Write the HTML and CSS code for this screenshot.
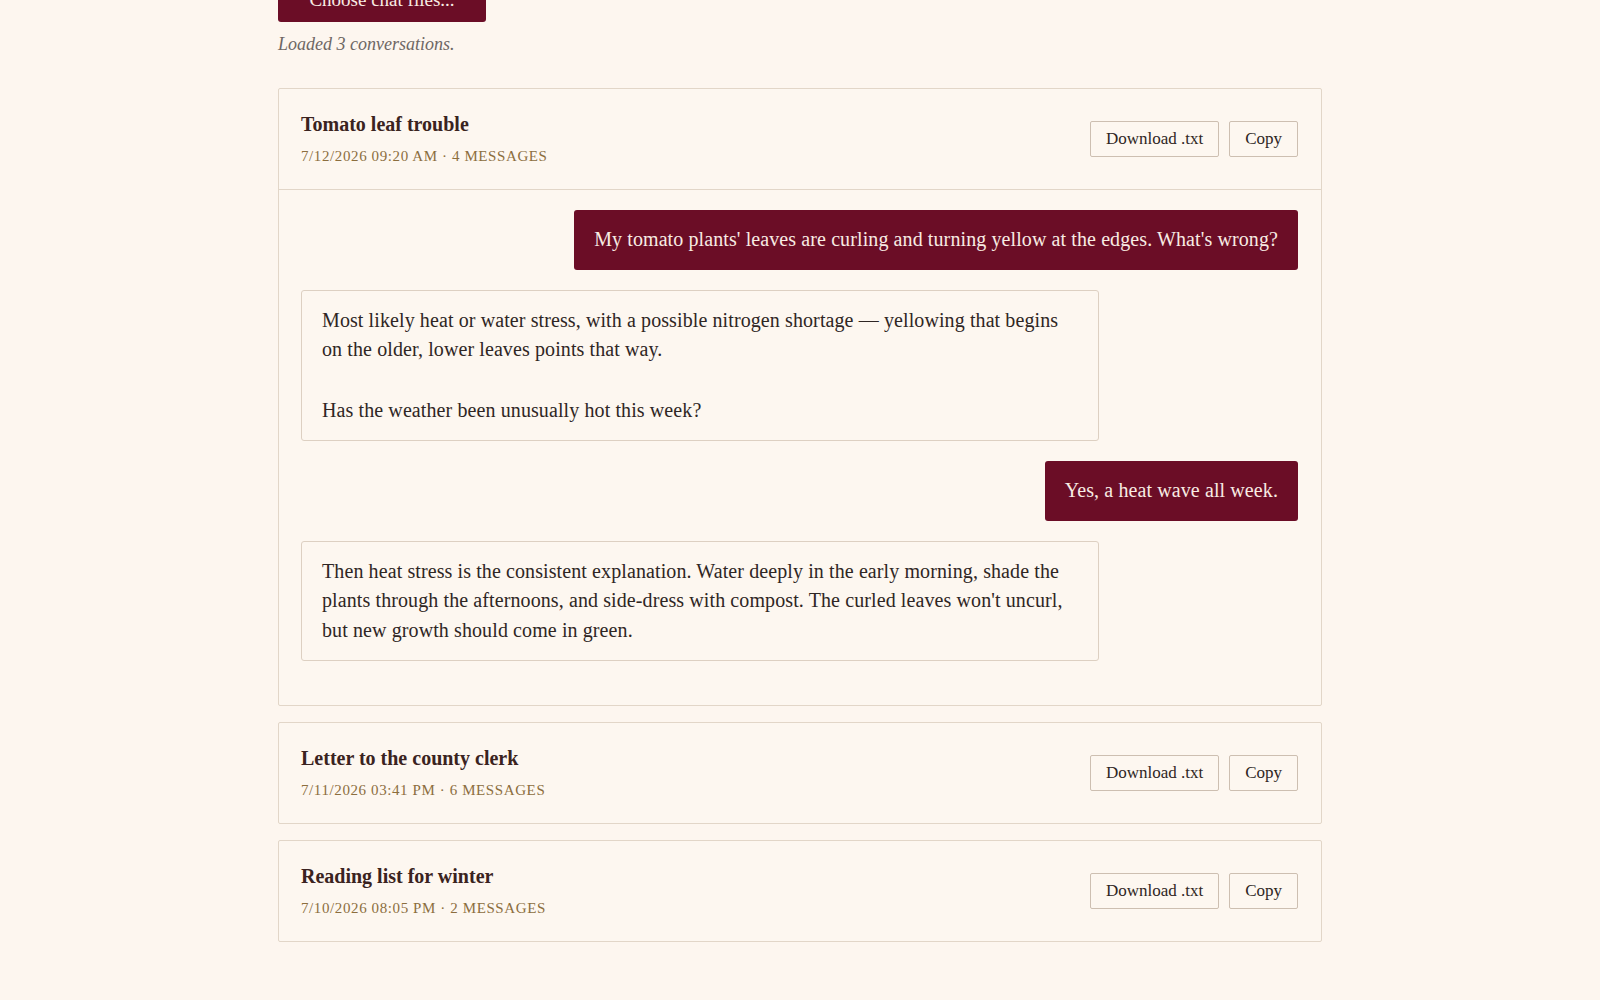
FILE: index.html
```html
<!DOCTYPE html>
<html lang="en">
<head>
    <meta charset="UTF-8">
    <meta name="viewport" content="width=device-width, initial-scale=1.0">
    <title>Chat Export Viewer</title>
    <link rel="stylesheet" href="styles.css">
</head>
<body>
    <div class="container">
        <!-- File picker -->
        <div class="loader">
            <button class="pick-btn">Choose chat files...</button>
            <p class="status">Loaded 3 conversations.</p>
        </div>

        <!-- Conversation list -->
        <div class="conversation open">
            <div class="conv-header">
                <div class="conv-info">
                    <h3>Tomato leaf trouble</h3>
                    <div class="meta">7/12/2026 09:20 AM &middot; 4 messages</div>
                </div>
                <div class="actions">
                    <button class="small-btn">Download .txt</button>
                    <button class="small-btn">Copy</button>
                </div>
            </div>
            <div class="messages">
                <div class="msg user">
                    <p>My tomato plants' leaves are curling and turning yellow at the edges. What's wrong?</p>
                </div>
                <div class="msg assistant">
                    <p>Most likely heat or water stress, with a possible nitrogen shortage — yellowing that begins on the older, lower leaves points that way.</p>
                    <p>Has the weather been unusually hot this week?</p>
                </div>
                <div class="msg user">
                    <p>Yes, a heat wave all week.</p>
                </div>
                <div class="msg assistant">
                    <p>Then heat stress is the consistent explanation. Water deeply in the early morning, shade the plants through the afternoons, and side-dress with compost. The curled leaves won't uncurl, but new growth should come in green.</p>
                </div>
            </div>
        </div>

        <div class="conversation">
            <div class="conv-header">
                <div class="conv-info">
                    <h3>Letter to the county clerk</h3>
                    <div class="meta">7/11/2026 03:41 PM &middot; 6 messages</div>
                </div>
                <div class="actions">
                    <button class="small-btn">Download .txt</button>
                    <button class="small-btn">Copy</button>
                </div>
            </div>
        </div>

        <div class="conversation">
            <div class="conv-header">
                <div class="conv-info">
                    <h3>Reading list for winter</h3>
                    <div class="meta">7/10/2026 08:05 PM &middot; 2 messages</div>
                </div>
                <div class="actions">
                    <button class="small-btn">Download .txt</button>
                    <button class="small-btn">Copy</button>
                </div>
            </div>
        </div>
    </div>
</body>
</html>
```

FILE: styles.css
```css
body {
    font-family: "Liberation Serif", "Times New Roman", serif;
    margin: 0;
    padding: 0;
    background-color: #fdf6ef;
    color: #2f2624;
}
.container {
    width: 1044px;
    margin: -22px auto 0;
    padding-bottom: 60px;
}
.loader {
    margin-bottom: 33px;
}
.pick-btn {
    font-family: inherit;
    font-size: 19px;
    height: 44px;
    width: 208px;
    padding: 0;
    background-color: #6b0d26;
    color: #f8ebe3;
    border: none;
    border-radius: 3px;
}
.status {
    margin: 12px 0 0;
    font-size: 18px;
    font-style: italic;
    color: #6e6764;
}
.conversation {
    border: 1px solid #e2d6c8;
    border-radius: 2px;
    background: #fdf7f0;
    margin-bottom: 16px;
}
.conv-header {
    display: flex;
    justify-content: space-between;
    align-items: center;
    padding: 22px 23px 23px 22px;
}
.conversation.open .conv-header {
    border-bottom: 1px solid #e2d6c8;
    padding-bottom: 23px;
}
.conv-info h3 {
    margin: 0;
    font-size: 20px;
    line-height: 26px;
    font-weight: bold;
    color: #3a2320;
}
.meta {
    margin-top: 9px;
    font-size: 15px;
    line-height: 20px;
    text-transform: uppercase;
    letter-spacing: 0.04em;
    color: #8c6e3e;
}
.actions {
    display: flex;
    gap: 10px;
}
.small-btn {
    font-family: inherit;
    font-size: 17px;
    height: 36px;
    padding: 0 15px;
    background-color: #fdf7f0;
    color: #2f2624;
    border: 1px solid #cdbfb1;
    border-radius: 2px;
}
.messages {
    display: flex;
    flex-direction: column;
    padding: 20px 23px 24px 22px;
}
.msg {
    font-size: 20px;
    line-height: 29.5px;
    letter-spacing: 0.1px;
    padding: 15px 20px;
    border-radius: 3px;
    margin-bottom: 20px;
    max-width: 80%;
    box-sizing: border-box;
}
.msg p {
    margin: 0;
}
.msg p + p {
    margin-top: 31px;
}
.msg.user {
    align-self: flex-end;
    background-color: #6b0d26;
    color: #f8ebe3;
}
.msg.assistant {
    align-self: flex-start;
    width: 80%;
    border: 1px solid #ddd0c2;
    background: #fdf7f0;
}
```
